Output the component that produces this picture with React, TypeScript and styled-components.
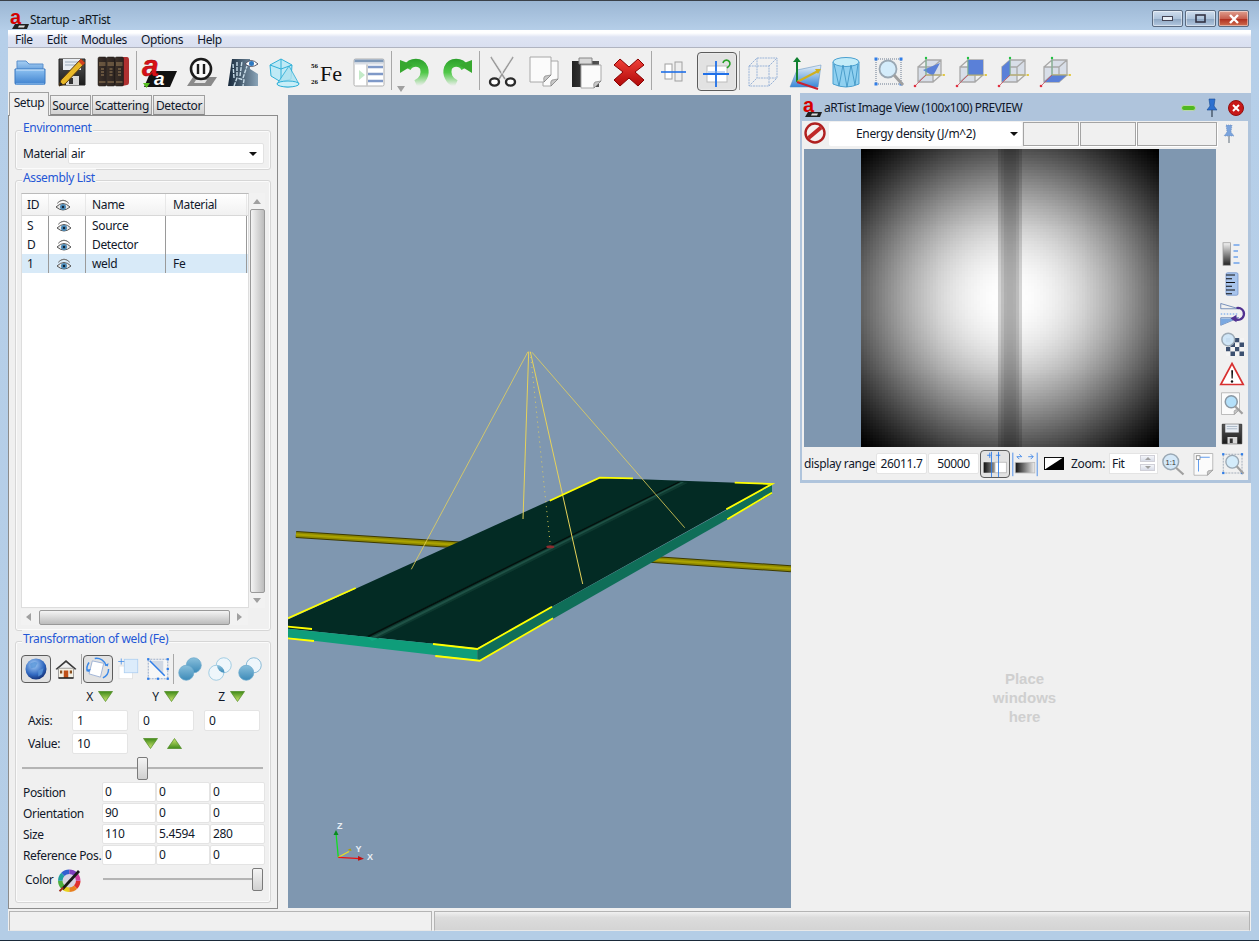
import React, { useMemo } from "react";
import styled, { createGlobalStyle } from "styled-components";

const Global = createGlobalStyle`
  html, body { margin: 0; padding: 0; background: #b4cde6; }
  * { box-sizing: border-box; }
`;

const FONT = "'Noto Sans', 'Open Sans', sans-serif";
const BG = "#f0f0f0";
const VIEW = "#7f97b0";

const Win = styled.div`
  width: 1259px; height: 941px; overflow: hidden; display: flex; flex-direction: column;
  font: 12px ${FONT}; letter-spacing: -.35px; color: #10182a;
  background: linear-gradient(#9bb6d3 0, #b6cfe9 30px, #b4cde6 100%);
  border-top: 1px solid #3a4048; border-bottom: 1px solid #1a2a3a;
`;
const TitleBar = styled.div`
  height: 29px; display: flex; align-items: center; padding: 8px 10px 0 10px; flex: none;
`;
const TitleText = styled.span`
  font-size: 12px; color: #101820;
`;
const WinBtns = styled.div`
  margin-left: auto; display: flex; gap: 2px; margin-top: 1px; align-self: flex-start;
`;
const WinBtn = styled.div<{ $close?: boolean }>`
  width: 31px; height: 17px; border: 1px solid #5a6a80; border-radius: 2px;
  display: flex; align-items: center; justify-content: center;
  background: ${(p) => p.$close
    ? "linear-gradient(#e0a090, #c86050 50%, #b03020 55%, #d07050)"
    : "linear-gradient(#d0deee, #aec4dc 50%, #8fa8c4 55%, #b4c8e0)"};
  box-shadow: inset 0 0 0 1px rgba(255,255,255,.45);
`;
const Client = styled.div`
  flex: 1; margin: 0 8px 9px; display: flex; flex-direction: column; background: ${BG}; min-height: 0;
`;
const MenuBar = styled.div`
  height: 18px; flex: none; display: flex; align-items: center; gap: 14px; padding: 2px 0 0 7px;
  background: linear-gradient(#fff 0, #fff 3px, #dfe4f3 7px, #d9dff0 100%);
  border-bottom: 1px solid #b0b4c0; font-size: 12px;
`;
const Toolbar = styled.div`
  height: 44px; flex: none; display: flex; align-items: flex-start; padding: 3px 0 0 1px;
`;
const ToolBtn = styled.div<{ $on?: boolean }>`
  width: 42px; height: 39px; margin-top: 1px; display: flex; align-items: center; justify-content: center;
  position: relative; flex: none;
  ${(p) => p.$on ? "border:1px solid #5c5c5c;border-radius:4px;background:#e2e2e2;box-shadow:inset 0 0 2px #fff;width:40px;margin:1px 1px 0;" : ""}
`;
const ToolSep = styled.div<{ $w?: number }>`
  width: ${(p) => p.$w ?? 4}px; height: 39px; flex: none; position: relative;
  &::before { content: ""; display: block; width: 1px; height: 39px; margin-left: 1px; background: #a8a8a8; }
`;
const UndoDrop = styled.span`
  position: absolute; left: 3px; bottom: -1px; width: 0; height: 0;
  border-left: 4px solid transparent; border-right: 4px solid transparent; border-top: 6px solid #a0a0a0;
`;
const Main = styled.div`
  flex: 1; display: flex; min-height: 0;
`;
const LeftCol = styled.div`
  width: 270px; flex: none; display: flex; flex-direction: column;
`;
const Tabs = styled.div`
  height: 23px; flex: none; display: flex; align-items: flex-end; padding-left: 1px; gap: 1px;
`;
const Tab = styled.div<{ $on?: boolean; $w: number }>`
  width: ${(p) => p.$w}px; height: ${(p) => (p.$on ? 24 : 20)}px; text-align: center; flex: none;
  border: 1px solid #a0a0a0; border-bottom: ${(p) => (p.$on ? "none" : "1px solid #888")};
  background: ${(p) => (p.$on ? BG : "linear-gradient(#f2f2f2, #d2d2d2)")};
  line-height: 20px; font-size: 12px;
  position: relative; z-index: ${(p) => (p.$on ? 2 : 0)}; margin-bottom: ${(p) => (p.$on ? -1 : 0)}px;
`;
const Pane = styled.div`
  flex: 1; border: 1px solid #8c8c8c; padding: 14px 6px 0; display: flex; flex-direction: column; gap: 10px; background: ${BG};
`;
const Group = styled.div<{ $h: number }>`
  height: ${(p) => p.$h}px; flex: none; border: 1px solid #d6d6d6; border-radius: 3px; position: relative;
  box-shadow: inset 0 0 0 1px #fbfbfb;
`;
const Legend = styled.span`
  position: absolute; left: 6px; top: -12px; padding: 0 1px; background: ${BG}; color: #2457d6; font-size: 12px; line-height: 17px;
`;
const EnvRow = styled.div`
  display: flex; align-items: center; justify-content: space-between; padding: 12px 6px 0 7px;
`;
const Combo = styled.div`
  width: 196px; flex: none; height: 21px; background: #fff; border: 1px solid #e2e2e2; border-radius: 2px;
  display: flex; align-items: center; padding: 0 2px; position: relative;
`;
const ComboArrow = styled.i`
  margin-left: auto; margin-right: 4px; width: 0; height: 0;
  border-left: 4px solid transparent; border-right: 4px solid transparent; border-top: 4px solid #111;
`;
const ListWrap = styled.div`
  padding: 12px 6px 0 5px;
`;
const ListTop = styled.div`
  display: flex; height: 415px;
`;
const Table = styled.div`
  width: 228px; flex: none; background: #fff; border: 1px solid #ddd; border-top: 1px solid #bbb;
`;
const Head = styled.div`
  display: grid; grid-template-columns: 27px 37px 80px 81px; height: 22px;
  background: linear-gradient(#fff, #f1f1f1); border-bottom: 1px solid #d8d8d8;
`;
const HeadCell = styled.div`
  padding-left: 5px; border-right: 1px solid #e8e8e8; display: flex; align-items: center;
  &:nth-child(3) { padding-left: 6px; }
  &:nth-child(4) { padding-left: 7px; }
  &:nth-child(2) { padding-left: 6px; }
`;
const Row = styled.div<{ $sel?: boolean }>`
  display: grid; grid-template-columns: 27px 37px 80px 81px; height: 19px;
  background: ${(p) => (p.$sel ? "#d8eaf8" : "#fff")};
`;
const Cell = styled.div`
  padding-left: 5px; border-right: 1px solid #9a9a9a; display: flex; align-items: center;
  &:nth-child(3) { padding-left: 6px; }
  &:nth-child(4) { padding-left: 7px; }
  &:nth-child(2) { padding-left: 7px; }
`;
const VScroll = styled.div`
  width: 16px; flex: none; background: #f2f2f2; display: flex; flex-direction: column; align-items: center; padding-bottom: 5px;
`;
const ScrollArrow = styled.span<{ $d: "up" | "down" | "left" | "right" }>`
  width: 0; height: 0; flex: none; border: 4px solid transparent; display: block;
  ${(p) => p.$d === "up" && "border-bottom:5px solid #a0a0a0;border-top:none;margin:6px 0 5px;"}
  ${(p) => p.$d === "down" && "border-top:5px solid #a0a0a0;border-bottom:none;margin:5px 0 0;"}
  ${(p) => p.$d === "left" && "border-right:5px solid #a0a0a0;border-left:none;margin:0 8px 0 5px;"}
  ${(p) => p.$d === "right" && "border-left:5px solid #a0a0a0;border-right:none;margin:0 6px 0 7px;"}
`;
const SpinArrow = styled(ScrollArrow)`
  margin: 0;
  border-width: 3px;
`;
const VThumb = styled.div`
  flex: 1; width: 15px; border: 1px solid #999; border-radius: 2px;
  background: linear-gradient(90deg, #f4f4f4, #d8d8d8 50%, #bcbcbc);
`;
const HScroll = styled.div`
  width: 227px; height: 16px; margin-top: 1px; background: #f2f2f2; display: flex; align-items: center;
`;
const HThumb = styled.div`
  flex: 1; height: 15px; border: 1px solid #999; border-radius: 2px;
  background: linear-gradient(#f4f4f4, #d8d8d8 50%, #bcbcbc);
`;
const XfBar = styled.div`
  display: flex; padding: 13px 0 0 5px; height: 41px;
`;
const XfBtn = styled.div<{ $on?: boolean }>`
  width: 30px; height: 28px; display: flex; align-items: center; justify-content: center; flex: none;
  ${(p) => p.$on ? "border:1px solid #5c5c5c;border-radius:4px;background:#e2e2e2;" : ""}
`;
const XfSep = styled.div`
  width: 2px; height: 30px; flex: none; margin-top: -1px;
  &::before { content: ""; display: block; width: 1px; height: 100%; background: #a8a8a8; }
`;
const AxisGrid = styled.div`
  display: grid; grid-template-columns: 41px 56px 56px 56px; column-gap: 10px; row-gap: 2px; padding-left: 5px; margin-top: 1px;
  align-items: center;
`;
const AxisHead = styled.div`
  height: 24px; display: flex; align-items: center; justify-content: center; gap: 5px; padding-right: 1px;
`;
const AxisLabel = styled.div`
  padding-left: 7px; margin-right: -6px;
`;
const Field = styled.div`
  height: 21px; background: #fff; border: 1px solid #e4e4e4; border-radius: 2px; padding-left: 4px; line-height: 19px; overflow: hidden;
`;
const Steps = styled.div`
  grid-column: span 2; display: flex; gap: 9px; padding-left: 5px; align-items: center;
`;
const SliderBox = styled.div<{ $w: number; $ml: number; $mt: number }>`
  width: ${(p) => p.$w}px; height: 23px; margin-left: ${(p) => p.$ml}px; margin-top: ${(p) => p.$mt}px; position: relative; flex: none;
  &::before { content: ""; position: absolute; left: 0; right: 0; top: 10px; height: 2px; background: #b4b4b4; border-bottom: 1px solid #eee; }
`;
const SliderThumb = styled.div<{ $x: number }>`
  position: absolute; left: ${(p) => p.$x}px; top: 0; width: 11px; height: 23px; border: 1px solid #7a7a7a; border-radius: 2px;
  background: linear-gradient(#f4f4f4, #d0d0d0);
`;
const PoseGrid = styled.div`
  display: grid; grid-template-columns: 81px 53px 53px 54px; gap: 1px; padding-left: 5px; margin-top: 2px; align-items: center;
`;
const PoseLabel = styled.div`
  padding-left: 2px; white-space: nowrap; margin-right: -3px;
`;
const PoseField = styled(Field)`
  height: 20px; line-height: 18px; padding-left: 2px; margin-left: -1px;
`;
const ColorRow = styled.div`
  display: flex; align-items: center; padding-left: 9px; margin-top: 3px; height: 23px;
`;
const ColorLabel = styled.span`
  margin-right: 5px;
`;
const Viewport = styled.div`
  width: 503px; flex: none; margin: 3px 9px 1px 10px; background: ${VIEW}; overflow: hidden;
`;
const SceneSvg = styled.svg`
  display: block; width: 503px; height: 813px; letter-spacing: 0;
`;
const RightCol = styled.div`
  flex: 1; display: flex; flex-direction: column; min-width: 0;
`;
const Dock = styled.div`
  margin-top: 1px; height: 390px; flex: none; background: #afc4dc; padding: 0 3px 3px 2px; display: flex; flex-direction: column;
`;
const DockTitle = styled.div`
  height: 28px; flex: none; display: flex; align-items: center; padding: 1px 0 0 1px; font-size: 12px;
`;
const DockName = styled.span`
  margin-left: 1px; letter-spacing: -.46px;
`;
const DockBtns = styled.div`
  margin-left: auto; display: flex; align-items: center; gap: 8px; padding-right: 4px;
`;
const DockBody = styled.div`
  flex: 1; background: ${BG}; display: flex; flex-direction: column; min-height: 0;
`;
const ViewBar = styled.div`
  height: 28px; flex: none; display: flex; align-items: flex-start; padding: 1px 0 0 2px;
`;
const ViewCombo = styled.div`
  width: 193px; height: 24px; margin-left: 3px; background: #fff; display: flex; align-items: center; padding: 0 0 1px 27px; border-radius: 2px; flex: none;
`;
const EmptyBox = styled.div<{ $w: number }>`
  width: ${(p) => p.$w}px; height: 24px; margin-left: 1px; flex: none; border: 1px solid #a4a4a4; box-shadow: 1px 1px 0 #fff;
`;
const PinSlot = styled.div`
  margin: 2px 0 0 4px;
`;
const ViewMid = styled.div`
  flex: 1; display: flex; min-height: 0;
`;
const PlotArea = styled.div`
  width: 412px; margin-left: 2px; flex: none; background: ${VIEW}; display: flex; align-items: center; justify-content: center;
`;
const PlotSvg = styled.svg`
  display: block; width: 298px; height: 298px;
`;
const SideIcons = styled.div`
  flex: 1; display: flex; flex-direction: column; justify-content: flex-end; align-items: center; gap: 6px; padding: 0 1px 1px 0;
`;
const ViewFoot = styled.div`
  height: 33px; flex: none; display: flex; align-items: center; padding-left: 2px;
`;
const RangeLabel = styled.span`
  margin-right: 2px; white-space: nowrap; width: 70px; flex: none;
`;
const RangeField = styled(Field)`
  width: 51px; margin-right: 1px; flex: none; text-align: center; padding: 0; margin-top: -1px;
`;
const FootBtn = styled.div<{ $on?: boolean; $w: number }>`
  width: ${(p) => p.$w}px; height: 28px; flex: none; display: flex; align-items: center; justify-content: center;
  ${(p) => p.$on ? "border:1px solid #5c5c5c;border-radius:4px;background:#e2e2e2;" : ""}
`;
const BwSlot = styled.div`
  margin-left: 4px;
`;
const ZoomLabel = styled.span`
  margin-left: 7px; width: 38px; flex: none;
`;
const Spin = styled.div`
  width: 49px; height: 21px; flex: none; background: #fff; border: 1px solid #e4e4e4; display: flex; align-items: center; padding-left: 2px; margin-top: -1px;
`;
const SpinBtns = styled.div`
  margin-left: auto; margin-right: 2px; display: flex; flex-direction: column; gap: 2px;
`;
const SpinBtn = styled.div`
  width: 15px; height: 7px; background: linear-gradient(#f4f6fa, #d8dce8); border: 1px solid #d0d0d8; display: flex; align-items: center; justify-content: center;
`;
const Dropzone = styled.div`
  flex: 1; display: flex; align-items: center; justify-content: center; text-align: center; padding: 3px 2px 0 0;
  font: bold 15px/19px 'Liberation Sans', sans-serif; letter-spacing: 0; color: #cfcfcf;
`;
const Status = styled.div`
  height: 22px; flex: none; display: flex; gap: 2px; padding: 2px 1px 0;
`;
const StatusCell = styled.div<{ $w?: number; $dark?: boolean }>`
  ${(p) => (p.$w ? `width:${p.$w}px;flex:none;` : "flex:1;")}
  border: 1px solid #b4b4b4; border-bottom-color: #e8e8e8;
  background: ${(p) => (p.$dark ? "linear-gradient(#f0f0f0,#dcdcdc 30%,#d4d4d4)" : BG)};
`;
const Ico = styled.svg`
  display: block; flex: none; overflow: visible; letter-spacing: 0;
`;

/* ---------- shared svg bits ---------- */
const Lg = ({ id, a, b, h }: { id: string; a: string; b: string; h?: boolean }) => (
  <linearGradient id={id} x1="0" y1="0" x2={h ? 1 : 0} y2={h ? 0 : 1}>
    <stop offset="0" stopColor={a} />
    <stop offset="1" stopColor={b} />
  </linearGradient>
);
const I = ({ s = 32, children }: { s?: number; children: React.ReactNode }) => (
  <Ico width={s} height={s} viewBox="0 0 32 32">{children}</Ico>
);

const Logo = ({ s = 20 }: { s?: number }) => (
  <Ico width={s} height={s} viewBox="0 0 20 20">
    <path d="M5 14h14l-2 5H2z" fill="#222" />
    <path d="M9 15.500h6l-1 2H8z" fill="#ddd" />
    <text x="0" y="14" fontFamily="Liberation Sans" fontWeight="bold" fontSize="20" fill="#d40000">a</text>
  </Ico>
);
const Folder = () => (
  <I>
    <defs><Lg id="fo1" a="#a8d0f4" b="#5b97d8" /><Lg id="fo2" a="#8ec2f2" b="#3f82cf" /></defs>
    <path d="M3 5h9l3 3h14v8H3z" fill="url(#fo1)" stroke="#5a8fcc" />
    <path d="M1 13h30v14a1.500 1.500 0 0 1-1.500 1.500h-27A1.500 1.500 0 0 1 1 27z" fill="url(#fo2)" stroke="#3a78c0" />
    <path d="M2 14h28" stroke="#cfe6fb" />
    <path d="M2 28h28" stroke="#9cc6ee" />
  </I>
);
const Floppy = ({ pencil, s = 32 }: { pencil?: boolean; s?: number }) => (
  <I s={s}>
    <defs><Lg id={pencil ? "fl1" : "fl2"} a="#555" b="#1c1c1c" /></defs>
    <path d="M3 3h26v26H3z" fill={`url(#${pencil ? "fl1" : "fl2"})`} stroke="#222" />
    <path d="M7 3h18v11H7z" fill="#e8edf3" />
    <path d="M9 6h14M9 9h14" stroke="#9ab" />
    <path d="M10 20h13v9H10z" fill="#d8d8d8" /><path d="M13 22h4v6h-4z" fill="#333" />
    {pencil && (
      <>
        <path d="M25 3l4 4L9 28l-6 2 2-6z" fill="#e8b828" stroke="#5a3a10" />
        <path d="M25 3l4 4-2.500 2.600-4-4z" fill="#d04020" />
        <path d="M3 30l1.500-4 2.500 2.500z" fill="#222" />
      </>
    )}
  </I>
);
const Books = () => (
  <I>
    <defs><Lg id="bk1" a="#3c3028" b="#2a2220" h /></defs>
    <path d="M24 1h5q2 0 2 3v22q0 3-2 3l-5 1z" fill="#b03030" />
    {[0, 8.5, 17].map((x) => (
      <g key={x}>
        <rect x={x} y={1} width={8.5} height={29} rx={1.5} fill="url(#bk1)" stroke="#181410" strokeWidth=".5" />
        <path d={`M${x + 1} 7h6.500M${x + 1} 9h6.500M${x + 3} 13h3M${x + 3} 16h3M${x + 3} 19h3M${x + 1} 26h6.500`} stroke="#a88a60" strokeWidth=".9" />
      </g>
    ))}
  </I>
);
const GreenDrop = () => <path d="M0 27h7l-3.500 5z" fill="#58c020" />;
const AAIcon = () => (
  <I>
    <path d="M8 15h26l-7 16H1z" fill="#111" />
    <text x="11" y="29" fontFamily="Liberation Sans" fontWeight="bold" fontStyle="italic" fontSize="19" fill="#fff">a</text>
    <text x="-1" y="20" fontFamily="Liberation Sans" fontWeight="bold" fontStyle="italic" fontSize="30" fill="#d81018" stroke="#900" strokeWidth=".4">a</text>
    <GreenDrop />
  </I>
);
const PauseIcon = () => (
  <I>
    <path d="M8 21h24l-6 9H2z" fill="#8a8a8a" />
    <path d="M11 24h11l-2 3H9z" fill="#e4e4e4" />
    <circle cx="16" cy="13" r="10" fill="#fafafa" stroke="#1c1c1c" strokeWidth="2.600" />
    <path d="M13 8v10M19 8v10" stroke="#1c1c1c" strokeWidth="2.400" />
  </I>
);
const XrayIcon = () => (
  <I>
    <defs><Lg id="xr" a="#16283a" b="#8aa4b8" h /></defs>
    <path d="M1 30L5 3h18v10l8 5v12z" fill="url(#xr)" />
    <path d="M7 22L6 8M10 20l0-15M13 20l2-15M16 22l4-12M7 30l3-8 7 2-1 6" stroke="#c8dce8" strokeWidth="1.400" fill="none" strokeDasharray="4 1" />
    <path d="M18 8q6-7 13 0-7 5-13 0z" fill="#fff" stroke="#556" />
    <circle cx="24.500" cy="7.500" r="2.500" fill="#2d78c0" />
  </I>
);
const CubeCone = () => (
  <I>
    <path d="M1 9l11-6 11 6-1 14-10 3-10-6z" fill="#bfeaf6" stroke="#30b0d8" />
    <path d="M1 9l11 4 11-4M12 13v13M12 3v10" stroke="#30b0d8" fill="none" />
    <path d="M20 10L8 28q10 6 22 0z" fill="#aee2f0" stroke="#30b0d8" opacity=".85" />
    <ellipse cx="19" cy="28" rx="11" ry="3" fill="#c8eef8" stroke="#30b0d8" />
  </I>
);
const FeIcon = () => (
  <I>
    <text x="0" y="12" fontFamily="Liberation Serif" fontWeight="bold" fontSize="7" fill="#111">56</text>
    <text x="0" y="28" fontFamily="Liberation Serif" fontWeight="bold" fontSize="7" fill="#111">26</text>
    <text x="9" y="25" fontFamily="Liberation Serif" fontSize="22" fill="#111">Fe</text>
  </I>
);
const PanelIcon = () => (
  <I>
    <rect x="1" y="3" width="30" height="27" rx="1.500" fill="#fff" stroke="#b0b0b0" />
    <path d="M1.500 3.500h29v3h-29z" fill="#7f99b8" />
    <path d="M1.500 6.500h29v2h-29z" fill="#d8dde4" />
    <path d="M14 8.500v21" stroke="#a0a0a0" />
    <path d="M6 14l6 5-6 5z" fill="#c4eac8" />
    <path d="M15 11h15M15 18h15M15 25h15" stroke="#7f99c8" strokeWidth="2.400" />
  </I>
);
const Curve = ({ id, flip }: { id: string; flip?: boolean }) => (
  <I>
    <defs>
      <linearGradient id={id} gradientUnits="userSpaceOnUse" x1="0" y1="3" x2="0" y2="30">
        <stop offset="0" stopColor="#2ca02c" /><stop offset=".5" stopColor="#50c848" /><stop offset="1" stopColor="#50c848" stopOpacity="0" />
      </linearGradient>
    </defs>
    <g transform={flip ? "translate(32 0) scale(-1 1)" : undefined}>
      <path d="M24 12C20 5 10 5 7 12 5 18 8 25 15 28" fill="none" stroke={`url(#${id})`} strokeWidth="8" />
      <path d="M18 9l13-5 0 13z" fill="#38a830" />
    </g>
  </I>
);
const Scissors = () => (
  <I>
    <path d="M4 1l14 22M26 1L12 23" stroke="#9a9a9a" strokeWidth="1.600" fill="none" />
    <path d="M5 1l14 21M25 1L11 22" stroke="#e8e8e8" strokeWidth=".8" fill="none" />
    <ellipse cx="7.500" cy="26" rx="4.500" ry="3.600" fill="#fff" stroke="#2a2a2a" strokeWidth="2.400" />
    <ellipse cx="23.500" cy="26" rx="4.500" ry="3.600" fill="#fff" stroke="#2a2a2a" strokeWidth="2.400" />
  </I>
);
const Page = ({ x, y, w, h }: { x: number; y: number; w: number; h: number }) => (
  <g>
    <path d={`M${x} ${y}h${w}v${h - 7}l-7 7h-${w - 7}z`} fill="#fbfbfb" stroke="#a8a8a8" />
    <path d={`M${x + w} ${y + h - 7}l-7 7q-1-5 1-6z`} fill="#c8c8c8" stroke="#777" strokeWidth=".6" />
  </g>
);
const CopyIcon = () => (
  <I>
    <Page x={14} y={5} w={15} h={25} />
    <Page x={1} y={1} w={21} h={25} />
  </I>
);
const PasteIcon = () => (
  <I>
    <defs><Lg id="ps" a="#222" b="#555" h /></defs>
    <path d="M1 5h27v26H1z" fill="url(#ps)" />
    <path d="M8 2h13v6H8z" fill="#d8d8d8" stroke="#888" />
    <Page x={10} y={9} w={20} h={23} />
  </I>
);
const XIcon = () => (
  <I>
    <defs><Lg id="xi" a="#f04038" b="#b00808" /></defs>
    <path d="M7 3l9 8 9-8 6 6-9 7 9 8-6 6-9-8-9 8-6-6 9-8-9-7z" fill="url(#xi)" stroke="#800" strokeWidth="1" />
  </I>
);
const SplitIcon = () => (
  <I>
    <rect x="6" y="8" width="7" height="15" fill="#fff" stroke="#a0a0a0" />
    <rect x="16" y="6" width="7" height="19" fill="#eee" stroke="#a0a0a0" />
    <path d="M2 16h25" stroke="#2070e8" strokeWidth="1.600" />
  </I>
);
const CrossHelp = () => (
  <I>
    <rect x="6" y="10" width="20" height="16" fill="#fff" stroke="#bbb" />
    <path d="M2 18h26M15 5v26" stroke="#2070e8" strokeWidth="1.800" />
    <path d="M7 16h17" stroke="#8ab0e8" />
    <path d="M22 7a3.500 3.500 0 1 1 6 3l-2 2" stroke="#28a028" strokeWidth="1.600" fill="none" />
  </I>
);
const WireCube = () => (
  <I>
    <g fill="none" stroke="#9ab4d8" strokeDasharray="2 .7">
      <path d="M2 10h20v20H2zM10 2h20v20H10zM2 10l8-8M22 10l8-8M22 30l8-8M2 30l8-8" />
    </g>
  </I>
);
const AxesIcon = () => (
  <I>
    <defs><Lg id="ax" a="#e8f0f8" b="#3a88d8" /></defs>
    <path d="M8 14l24-5-3 22H1z" fill="url(#ax)" stroke="#5588bb" strokeWidth=".5" />
    <path d="M8 26V4" stroke="#108030" strokeWidth="2" /><path d="M4 6l4-5 4 5z" fill="#108030" />
    <path d="M8 26L29 15" stroke="#d0b020" strokeWidth="2" /><path d="M26 13l6 0-3 5z" fill="#d0b020" />
    <path d="M8 26l21 7" stroke="#c82030" strokeWidth="2" />
  </I>
);
const Cylinder = () => (
  <I>
    <path d="M2 6v22q13 6 26 0V6z" fill="#8fd0f0" stroke="#4aa0d0" />
    <ellipse cx="15" cy="6" rx="13" ry="4.500" fill="#c4ecf8" stroke="#4aa0d0" />
    <path d="M3 8l5 22 4-21 4 22 4-22 4 20 3-21" stroke="#3a90c0" fill="none" strokeWidth=".8" />
  </I>
);
const ZoomSel = ({ s = 32 }: { s?: number }) => (
  <I s={s}>
    <rect x="3" y="3" width="25" height="25" fill="none" stroke="#6a7a90" strokeDasharray="1 1" />
    {[[3, 3], [28, 3], [3, 28], [28, 28]].map(([x, y]) => (
      <rect key={`${x}${y}`} x={x - 1.5} y={y - 1.5} width="3" height="3" fill="#2f7de8" />
    ))}
    <circle cx="15" cy="13" r="8.500" fill="#d4ecfb" stroke="#9aa8b4" strokeWidth="1.800" />
    <path d="M21 19l9 10" stroke="#a0a0a0" strokeWidth="3" />
  </I>
);
const ViewCube = ({ face }: { face: string }) => (
  <I>
    <g transform="translate(-1 0)">
      <path d="M4 11h15v15H4zM12 4h15v15H12zM4 11l8-7M19 11l8-7M19 26l8-7M4 26l8-7" fill="#c4d0e2" fillOpacity=".55" stroke="#a8a8a8" strokeWidth="1.300" />
      <path d={face} fill="#5a80d8" />
      <path d="M12 19V2" stroke="#70b888" strokeWidth=".8" /><circle cx="12" cy="2" r="1.200" fill="#20c040" />
      <path d="M12 19h18" stroke="#c8b850" strokeWidth=".8" /><circle cx="30" cy="19" r="1" fill="#e0c020" />
      <path d="M12 19L1 30" stroke="#c85060" strokeWidth=".8" /><circle cx="1" cy="30" r="1.300" fill="#e03040" />
    </g>
  </I>
);
const Eye = () => (
  <Ico width="16" height="16" viewBox="0 0 16 16">
    <path d="M2 6.500Q8 0 14 6.500M3.500 5Q8 1.500 12.500 5" fill="none" stroke="#777" strokeWidth=".9" />
    <path d="M1 10q7-7 14 0-7 6-14 0z" fill="#e8e8e8" stroke="#555" />
    <circle cx="8" cy="10" r="3" fill="#4a8ab8" />
    <circle cx="8" cy="10" r="1.200" fill="#123" />
  </Ico>
);
const Tri = ({ up }: { up?: boolean }) => (
  <Ico width="15" height="11" viewBox="0 0 15 11">
    <defs><Lg id={up ? "trU" : "trD"} a={up ? "#d0e870" : "#3f8a18"} b={up ? "#3f8a18" : "#d0e870"} /></defs>
    <path d={up ? "M7.500.500L14.500 10.500H.500z" : "M.500.500h14L7.500 10.500z"} fill={`url(#${up ? "trU" : "trD"})`} stroke="#4c8a20" strokeWidth=".7" />
  </Ico>
);
const Globe = () => (
  <I s={24}>
    <defs><radialGradient id="gb" cx=".4" cy=".3" r=".8"><stop offset="0" stopColor="#a8d0f8" /><stop offset=".6" stopColor="#3068c0" /><stop offset="1" stopColor="#0c2060" /></radialGradient></defs>
    <circle cx="16" cy="16" r="14" fill="url(#gb)" />
    <path d="M8 9q6-4 10-1l-3 6-6 1zM19 18l7-3-2 8-5 3z" fill="#5a96d8" opacity=".8" />
  </I>
);
const House = () => (
  <I s={24}>
    <path d="M2 16L16 4l14 12-2 1L16 7 4 17z" fill="#3a3a3a" />
    <path d="M6 15h20v13H6z" fill="#f4f0e4" stroke="#888" />
    <path d="M13 18h6v10h-6z" fill="#c05018" />
    <path d="M8 18h3v4H8zM21 18h3v4h-3z" fill="#8a5020" />
    <path d="M6 28h20" stroke="#222" strokeWidth="2" />
  </I>
);
const RotateIcon = () => (
  <I s={26}>
    <path d="M9 6l14 3-4 17-14-4z" fill="#fff" stroke="#90a8d0" />
    <path d="M3 19a12 12 0 0 1 2-11M12 3a12 12 0 0 1 14 9M29 16a12 12 0 0 1-7 11" fill="none" stroke="#3a88e8" strokeWidth="1.800" />
    <path d="M1 17l4 3 2-4zM24 11l4 2 1-4z" fill="#3a88e8" />
  </I>
);
const TranslateIcon = () => (
  <I s={24}>
    <rect x="4" y="12" width="18" height="17" fill="#fff" stroke="#ddd" />
    <rect x="11" y="3" width="18" height="18" fill="#dcecfb" stroke="#a8ccf0" />
    <path d="M3 6h8M7 2v8" stroke="#3a88e8" />
  </I>
);
const ScaleIcon = () => (
  <I s={24}>
    <path d="M3 3h26v26H3z" fill="#f6f6f6" stroke="#5577aa" strokeDasharray="1 1" />
    <path d="M5 5h18v18z" fill="#d0d8e4" />
    <path d="M5 5l20 20" stroke="#2f7de8" strokeWidth="2" />
    {[[3, 3], [29, 3], [3, 29], [29, 29], [16, 29], [29, 16]].map(([x, y]) => (
      <rect key={`${x}-${y}`} x={x - 1.5} y={y - 1.5} width="3" height="3" fill="#2f7de8" />
    ))}
  </I>
);
const Spheres = ({ id, hollow, gloss }: { id: string; hollow?: boolean; gloss?: boolean }) => (
  <I s={24}>
    <defs><linearGradient id={id} x1="0" y1="0" x2="0" y2="1"><stop offset="0" stopColor="#8ac0dc" /><stop offset="1" stopColor="#3c8ab8" /></linearGradient></defs>
    {hollow ? (
      <>
        <circle cx="21" cy="11" r="10" fill="#eef6fb" stroke="#8ac0dc" />
        <circle cx="11" cy="21" r="10" fill="#eef6fb" stroke="#8ac0dc" />
        <path d="M12 11a10 10 0 0 1 10 10 10 10 0 0 1-10-10z" fill={`url(#${id})`} />
      </>
    ) : (
      <>
        <circle cx="21" cy="11" r="10" fill={gloss ? "#eef6fb" : `url(#${id})`} stroke="#6aa8cc" />
        <circle cx="11" cy="21" r="10" fill={`url(#${id})`} stroke="#6aa8cc" />
      </>
    )}
  </I>
);
const WHEEL = ["#e03030", "#e88020", "#e8d020", "#50b040", "#20a0a0", "#3060d0", "#8040c0", "#d040a0"];
const Palette = () => (
  <I s={24}>
    <circle cx="15" cy="17" r="10" fill="#d8d4e4" />
    {WHEEL.map((c, i) => {
      const a = (i / 8) * Math.PI * 2;
      const b = ((i + 1) / 8) * Math.PI * 2;
      const p = (t: number, r: number) => `${(15 + r * Math.cos(t)).toFixed(2)} ${(17 + r * Math.sin(t)).toFixed(2)}`;
      return <path key={c} d={`M${p(a, 12)}A12 12 0 0 1 ${p(b, 12)}`} fill="none" stroke={c} strokeWidth="6" />;
    })}
    <path d="M6 28L28 4" stroke="#1a1a1a" strokeWidth="3.600" />
    <path d="M2 31l5-5" stroke="#a03020" strokeWidth="2.400" />
  </I>
);
const NoEntry = () => (
  <Ico width="22" height="22" viewBox="0 0 22 22">
    <circle cx="11" cy="11" r="9.500" fill="#f4f0f0" stroke="#b02020" strokeWidth="2.400" />
    <path d="M4.500 16L17 5.500" stroke="#c02828" strokeWidth="4" />
  </Ico>
);
const GreenDash = () => (
  <Ico width="15" height="6" viewBox="0 0 15 6"><rect x=".5" y=".5" width="14" height="5" rx="2.500" fill="#50b820" stroke="#b8d8a8" /></Ico>
);
const Pin = ({ faded }: { faded?: boolean }) => (
  <Ico width="16" height="20" viewBox="0 0 16 20" opacity={faded ? 0.6 : 1}>
    <path d="M5 1h6l-1 7 3 4H3l3-4z" fill="#2c70d0" stroke="#174a90" strokeWidth=".6" strokeDasharray={faded ? "1 1" : undefined} />
    <path d="M8 12v7" stroke="#456" strokeWidth="1.400" />
  </Ico>
);
const RedClose = () => (
  <Ico width="16" height="16" viewBox="0 0 16 16">
    <circle cx="8" cy="8" r="7.500" fill="#c81818" stroke="#901010" />
    <path d="M5 5l6 6M11 5l-6 6" stroke="#fff" strokeWidth="2" />
  </Ico>
);
const GradBar = () => (
  <I s={24}>
    <defs><Lg id="gbr" a="#f4f4f4" b="#222" /></defs>
    <rect x="4" y="1" width="10" height="30" fill="url(#gbr)" stroke="#999" />
    <path d="M18 4h8M18 12h6M18 20h6M18 28h8" stroke="#2f7de8" strokeWidth="1.500" />
  </I>
);
const Ruler = () => (
  <I s={24}>
    <rect x="8" y="1" width="16" height="30" rx="2" fill="#a8c4ec" stroke="#7090c8" />
    <path d="M8 4h12M8 9h8M8 14h12M8 19h8M8 24h12M8 29h8" stroke="#111" strokeWidth="1.500" />
  </I>
);
const FlipIcon = () => (
  <I s={24}>
    <path d="M1 2l24 7H1zM1 31l24-10H1z" fill="#f0f0f0" stroke="#5070a8" />
    <path d="M1 22L22 22 1 31z" fill="#7aa8e0" />
    <path d="M22 8a8 8 0 1 1-3 14" fill="none" stroke="#503090" strokeWidth="3" />
    <path d="M14 22l8-5v10z" fill="#503090" />
    <path d="M1 16h24" stroke="#2f7de8" strokeDasharray="2 2" />
  </I>
);
const CheckZoom = () => (
  <I s={24}>
    {[0, 1, 2, 3].flatMap((r) => [0, 1, 2, 3].map((c) => (
      <rect key={`${r}${c}`} x={8 + c * 6} y={8 + r * 6} width="6" height="6" fill={(r + c) % 2 ? "#f4f4f4" : "#3c5070"} />
    )))}
    <circle cx="11" cy="10" r="8.500" fill="#cfe6f8" stroke="#9aa8b4" strokeWidth="2" opacity=".95" />
  </I>
);
const Warn = () => (
  <I s={24}>
    <path d="M16 2L31 30H1z" fill="#fff" stroke="#d83030" strokeWidth="2.200" />
    <path d="M15 11h2.400l-.4 11h-1.600z" fill="#111" /><circle cx="16" cy="26" r="1.600" fill="#111" />
  </I>
);
const PageZoom = ({ s = 24 }: { s?: number }) => (
  <I s={s}>
    <Page x={2} y={1} w={24} h={29} />
    <circle cx="15" cy="13" r="8" fill="#b4e0fa" stroke="#8a98a4" strokeWidth="2" />
    <path d="M20 19l10 10" stroke="#a0a0a0" strokeWidth="3" />
  </I>
);
const OneOne = () => (
  <I s={24}>
    <circle cx="13" cy="13" r="10.500" fill="#d4e8f8" stroke="#9aa8b4" strokeWidth="2" />
    <text x="6" y="17" fontFamily="Liberation Sans" fontSize="10" fill="#333">1:1</text>
    <path d="M20 21l10 9" stroke="#a0a0a0" strokeWidth="3" />
  </I>
);
const PageAxes = () => (
  <I s={24}>
    <Page x={4} y={2} w={25} h={29} />
    <rect x="7" y="5" width="5" height="5" fill="#fff" stroke="#777" />
    <path d="M12 7h13M10 10v16" stroke="#2f7de8" />
  </I>
);
const RangeA = () => (
  <I s={28}>
    <defs><Lg id="ra" a="#111" b="#999" h /></defs>
    <rect x="3" y="14" width="13" height="12" fill="url(#ra)" />
    <rect x="16" y="14" width="13" height="12" fill="#fff" stroke="#bbb" />
    <path d="M12 2v29M20 2v29" stroke="#2f7de8" />
    <path d="M7 6h4M10 3v6M17 6h5M20 3v6" stroke="#2f7de8" />
  </I>
);
const RangeB = () => (
  <I s={26}>
    <defs><Lg id="rb" a="#111" b="#eee" h /></defs>
    <rect x="4" y="14" width="24" height="13" fill="url(#rb)" stroke="#bbb" />
    <path d="M1 2v29M31 2v29" stroke="#2f7de8" />
    <path d="M6 7h6l-3-3M6 7l3 3M20 7h6l-3-3M26 7l-3 3" stroke="#2f7de8" fill="none" />
  </I>
);
const BlackWhite = () => (
  <Ico width="20" height="13" viewBox="0 0 20 13">
    <rect x=".5" y=".5" width="19" height="12" fill="#fff" stroke="#111" />
    <path d="M0 13L20 0v13z" fill="#000" />
  </Ico>
);

/* ---------- 3D scene ---------- */
const RODS = ["M296 534.500L460 545", "M646 559L791 568.700"];
const Scene = () => (
  <SceneSvg viewBox="288 95 503 813">
    {RODS.map((d) => (
      <g key={d} fill="none">
        <path d={d} stroke="#3d3a00" strokeWidth="7" />
        <path d={d} stroke="#8e8800" strokeWidth="5" />
        <path d={d} stroke="#aba300" strokeWidth="2" />
      </g>
    ))}
    <path d="M288 619.500L600 477.700 772 484 477.300 648.300 288 628.700z" fill="#032b24" />
    <path d="M288 628.700L477.300 648.300V660L288 637.700z" fill="#0f9d7a" />
    <path d="M477.300 648.300L772 484.700V494L479.700 660.700 477.300 660z" fill="#0f6e58" />
    <path d="M366 636.500L678 481.700 688 482.700 378 638.500z" fill="#0e3a30" />
    <path d="M366 636.500L678 481.700 680.500 481.900 369 637z" fill="#04100d" />
    <path d="M371 637.500L681.500 482 684 482.300 375 638z" fill="#1f5246" />
    <path d="M366 636.500L378 638.500 372 641z" fill="#12a883" />
    <g fill="none" stroke="#e6d25a">
      <path d="M528 351.700L411.300 569.300" strokeWidth=".8" />
      <path d="M528.700 351.700L523 519" strokeWidth="1" />
      <path d="M530.300 351.700L582.700 584" strokeWidth="1" />
      <path d="M532 352.300L684.700 527.700" strokeWidth=".8" />
      <path d="M530.300 352L550.300 545" strokeWidth=".9" strokeDasharray="1 4" />
    </g>
    <ellipse cx="550.300" cy="546.800" rx="4" ry="1.500" fill="#8c2c30" />
    <g fill="none" stroke="#ffff00" strokeWidth="1.800">
      <path d="M288 618.300L355.700 588" />
      <path d="M288 626.700L312 629" />
      <path d="M288 638.300L314 641" />
      <path d="M549.700 500.700L599.700 477.700 633 478.300" />
      <path d="M734.700 482.700L772 484 726.300 509.300" />
      <path d="M772 492.700L727.300 519.300" />
      <path d="M433 644L477.300 649 552 606.700" />
      <path d="M435.300 656L479.700 660.700 553 618.300" />
    </g>
    <g fill="none" strokeWidth="1.300">
      <path d="M338.300 857.300L336 833" stroke="#10e020" />
      <path d="M338.300 857.300L349 851.500" stroke="#e8e020" />
      <path d="M338.300 857.300L360 858.700" stroke="#f01010" />
    </g>
    <path d="M333.500 835l2.500-5 2.500 5z" fill="#0a8a20" />
    <path d="M358 856l6 2.700-6 2z" fill="#c01010" />
    <path d="M347.500 850l3-1.500 1 2.500z" fill="#b0a000" />
    <g fill="#e8eef4" fontFamily="Liberation Sans" fontWeight="bold" fontSize="9">
      <text x="337" y="829">Z</text>
      <text x="355.500" y="852">Y</text>
      <text x="367" y="860">X</text>
    </g>
  </SceneSvg>
);

/* ---------- image preview ---------- */
const BAND: Record<number, number> = { 46: 0.83, 47: 0.75, 48: 0.69, 49: 0.68, 50: 0.68, 51: 0.69, 52: 0.74, 53: 0.84 };
const Plot = () => {
  const cells = useMemo(() => {
    const out: React.ReactNode[] = [];
    for (let j = 0; j < 100; j++) {
      for (let i = 0; i < 100; i++) {
        const u = (i + 0.5 - 50) / 50;
        const v = (j + 0.5 - 50) / 50;
        const r = u * u + 1.15 * v * v;
        const base = Math.min(1, Math.max(0, 1 - 0.75 * r + 0.13 * r * r));
        const g = Math.round(255 * base * (BAND[i] ?? 1));
        out.push(<rect key={j * 100 + i} x={i} y={j} width="1.02" height="1.02" fill={`rgb(${g},${g},${g})`} />);
      }
    }
    return out;
  }, []);
  return <PlotSvg viewBox="0 0 100 100" shapeRendering="crispEdges">{cells}</PlotSvg>;
};

const rows = [
  { id: "S", name: "Source", mat: "" },
  { id: "D", name: "Detector", mat: "" },
  { id: "1", name: "weld", mat: "Fe", sel: true },
];
const pose = [
  ["Position", "0", "0", "0"],
  ["Orientation", "90", "0", "0"],
  ["Size", "110", "5.4594", "280"],
  ["Reference Pos.", "0", "0", "0"],
];

export default function App() {
  return (
    <>
      <Global />
      <Win>
        <TitleBar>
          <Logo />
          <TitleText>Startup - aRTist</TitleText>
          <WinBtns>
            <WinBtn><Ico width="11" height="5" viewBox="0 0 11 5"><rect x=".5" y=".5" width="10" height="4" fill="#e8eef6" stroke="#445" /></Ico></WinBtn>
            <WinBtn><Ico width="11" height="9" viewBox="0 0 11 9"><rect x="1" y="1" width="9" height="7" fill="none" stroke="#334" strokeWidth="1.600" /></Ico></WinBtn>
            <WinBtn $close><Ico width="12" height="10" viewBox="0 0 12 10"><path d="M2 1l8 8M10 1l-8 8" stroke="#fff" strokeWidth="2.400" /></Ico></WinBtn>
          </WinBtns>
        </TitleBar>
        <Client>
          <MenuBar>
            {["File", "Edit", "Modules", "Options", "Help"].map((m) => <span key={m}>{m}</span>)}
          </MenuBar>
          <Toolbar>
            <ToolBtn><Folder /></ToolBtn>
            <ToolBtn><Floppy pencil /></ToolBtn>
            <ToolBtn><Books /></ToolBtn>
            <ToolSep $w={3} />
            <ToolBtn><AAIcon /></ToolBtn>
            <ToolBtn><PauseIcon /></ToolBtn>
            <ToolBtn><XrayIcon /></ToolBtn>
            <ToolBtn><CubeCone /></ToolBtn>
            <ToolBtn><FeIcon /></ToolBtn>
            <ToolBtn><PanelIcon /></ToolBtn>
            <ToolSep />
            <ToolBtn><Curve id="cu1" flip /><UndoDrop /></ToolBtn>
            <ToolBtn><Curve id="cu2" /></ToolBtn>
            <ToolSep />
            <ToolBtn><Scissors /></ToolBtn>
            <ToolBtn><CopyIcon /></ToolBtn>
            <ToolBtn><PasteIcon /></ToolBtn>
            <ToolBtn><XIcon /></ToolBtn>
            <ToolSep />
            <ToolBtn><SplitIcon /></ToolBtn>
            <ToolBtn $on><CrossHelp /></ToolBtn>
            <ToolSep />
            <ToolBtn><WireCube /></ToolBtn>
            <ToolBtn><AxesIcon /></ToolBtn>
            <ToolBtn><Cylinder /></ToolBtn>
            <ToolBtn><ZoomSel /></ToolBtn>
            <ToolBtn><ViewCube face="M9 14L26 7 19 20z" /></ToolBtn>
            <ToolBtn><ViewCube face="M12 4h15v15H12z" /></ToolBtn>
            <ToolBtn><ViewCube face="M4 11l8-7v15l-8 7z" /></ToolBtn>
            <ToolBtn><ViewCube face="M4 26l8-7h15l-8 7z" /></ToolBtn>
          </Toolbar>
          <Main>
            <LeftCol>
              <Tabs>
                <Tab $on $w={40}>Setup</Tab>
                <Tab $w={41}>Source</Tab>
                <Tab $w={60}>Scattering</Tab>
                <Tab $w={52}>Detector</Tab>
              </Tabs>
              <Pane>
                <Group $h={40}>
                  <Legend>Environment</Legend>
                  <EnvRow>
                    <span>Material</span>
                    <Combo>air<ComboArrow /></Combo>
                  </EnvRow>
                </Group>
                <Group $h={451}>
                  <Legend>Assembly List</Legend>
                  <ListWrap>
                    <ListTop>
                      <Table>
                        <Head>
                          <HeadCell>ID</HeadCell>
                          <HeadCell><Eye /></HeadCell>
                          <HeadCell>Name</HeadCell>
                          <HeadCell>Material</HeadCell>
                        </Head>
                        {rows.map((r) => (
                          <Row key={r.id} $sel={r.sel}>
                            <Cell>{r.id}</Cell>
                            <Cell><Eye /></Cell>
                            <Cell>{r.name}</Cell>
                            <Cell>{r.mat}</Cell>
                          </Row>
                        ))}
                      </Table>
                      <VScroll>
                        <ScrollArrow $d="up" />
                        <VThumb />
                        <ScrollArrow $d="down" />
                      </VScroll>
                    </ListTop>
                    <HScroll>
                      <ScrollArrow $d="left" />
                      <HThumb />
                      <ScrollArrow $d="right" />
                    </HScroll>
                  </ListWrap>
                </Group>
                <Group $h={262}>
                  <Legend>Transformation of weld (Fe)</Legend>
                  <XfBar>
                    <XfBtn $on><Globe /></XfBtn>
                    <XfBtn><House /></XfBtn>
                    <XfSep />
                    <XfBtn $on><RotateIcon /></XfBtn>
                    <XfBtn><TranslateIcon /></XfBtn>
                    <XfBtn><ScaleIcon /></XfBtn>
                    <XfSep />
                    <XfBtn><Spheres id="sp1" /></XfBtn>
                    <XfBtn><Spheres id="sp2" hollow /></XfBtn>
                    <XfBtn><Spheres id="sp3" gloss /></XfBtn>
                  </XfBar>
                  <AxisGrid>
                    <span />
                    <AxisHead>X <Tri /></AxisHead>
                    <AxisHead>Y <Tri /></AxisHead>
                    <AxisHead>Z <Tri /></AxisHead>
                    <AxisLabel>Axis:</AxisLabel>
                    <Field>1</Field>
                    <Field>0</Field>
                    <Field>0</Field>
                    <AxisLabel>Value:</AxisLabel>
                    <Field>10</Field>
                    <Steps><Tri /><Tri up /></Steps>
                  </AxisGrid>
                  <SliderBox $w={241} $ml={6} $mt={3}><SliderThumb $x={115} /></SliderBox>
                  <PoseGrid>
                    {pose.map(([l, a, b, c]) => (
                      <React.Fragment key={l}>
                        <PoseLabel>{l}</PoseLabel>
                        <PoseField>{a}</PoseField>
                        <PoseField>{b}</PoseField>
                        <PoseField>{c}</PoseField>
                      </React.Fragment>
                    ))}
                  </PoseGrid>
                  <ColorRow>
                    <ColorLabel>Color</ColorLabel>
                    <Palette />
                    <SliderBox $w={160} $ml={21} $mt={0}><SliderThumb $x={149} /></SliderBox>
                  </ColorRow>
                </Group>
              </Pane>
            </LeftCol>
            <Viewport><Scene /></Viewport>
            <RightCol>
              <Dock>
                <DockTitle>
                  <Logo />
                  <DockName>aRTist Image View (100x100) PREVIEW</DockName>
                  <DockBtns>
                    <GreenDash />
                    <Pin />
                    <RedClose />
                  </DockBtns>
                </DockTitle>
                <DockBody>
                  <ViewBar>
                    <NoEntry />
                    <ViewCombo>Energy density (J/m^2)<ComboArrow /></ViewCombo>
                    <EmptyBox $w={56} />
                    <EmptyBox $w={56} />
                    <EmptyBox $w={80} />
                    <PinSlot><Pin faded /></PinSlot>
                  </ViewBar>
                  <ViewMid>
                    <PlotArea><Plot /></PlotArea>
                    <SideIcons>
                      <GradBar />
                      <Ruler />
                      <FlipIcon />
                      <CheckZoom />
                      <Warn />
                      <PageZoom />
                      <Floppy s={24} />
                    </SideIcons>
                  </ViewMid>
                  <ViewFoot>
                    <RangeLabel>display range</RangeLabel>
                    <RangeField>26011.7</RangeField>
                    <RangeField>50000</RangeField>
                    <FootBtn $on $w={30}><RangeA /></FootBtn>
                    <FootBtn $w={30}><RangeB /></FootBtn>
                    <BwSlot><BlackWhite /></BwSlot>
                    <ZoomLabel>Zoom:</ZoomLabel>
                    <Spin>
                      Fit
                      <SpinBtns>
                        <SpinBtn><SpinArrow $d="up" /></SpinBtn>
                        <SpinBtn><SpinArrow $d="down" /></SpinBtn>
                      </SpinBtns>
                    </Spin>
                    <FootBtn $w={30}><OneOne /></FootBtn>
                    <FootBtn $w={30}><PageAxes /></FootBtn>
                    <FootBtn $w={30}><ZoomSel s={24} /></FootBtn>
                  </ViewFoot>
                </DockBody>
              </Dock>
              <Dropzone>Place<br />windows<br />here</Dropzone>
            </RightCol>
          </Main>
          <Status>
            <StatusCell $w={423} />
            <StatusCell $dark />
          </Status>
        </Client>
      </Win>
    </>
  );
}
